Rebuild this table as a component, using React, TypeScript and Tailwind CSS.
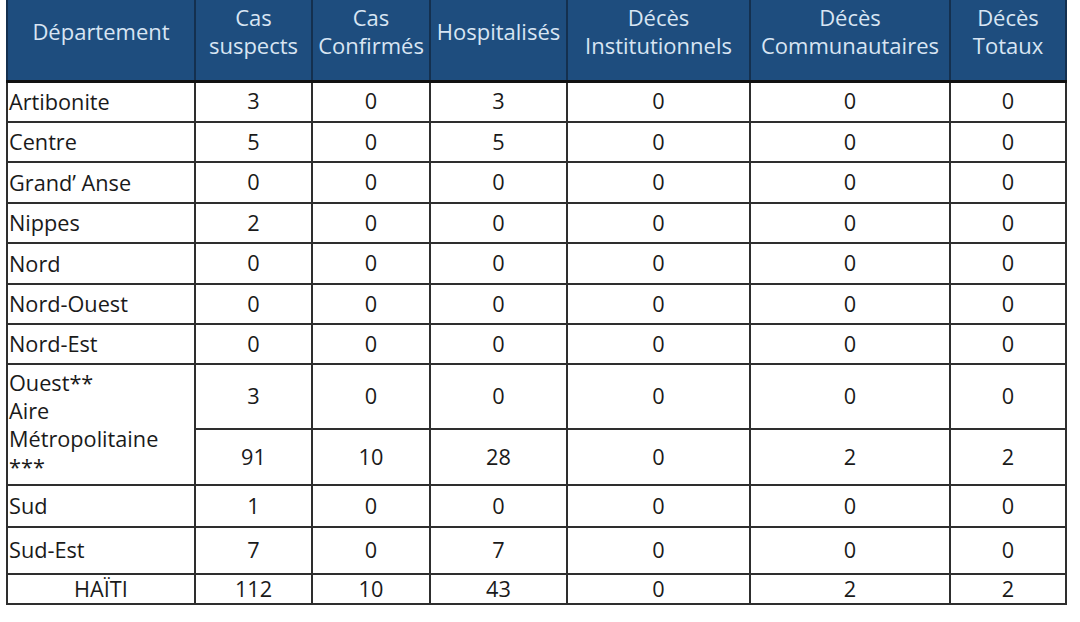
import React from "react";

const cols = [188, 117, 118, 137, 183, 200, 116];

const headers: string[][] = [
  ["Département"],
  ["Cas", "suspects"],
  ["Cas", "Confirmés"],
  ["Hospitalisés"],
  ["Décès", "Institutionnels"],
  ["Décès", "Communautaires"],
  ["Décès", "Totaux"],
];

type Row = { name: string; vals: string[]; h: number };

const rowsTop: Row[] = [
  { name: "Artibonite", vals: ["3", "0", "3", "0", "0", "0"], h: 41 },
  { name: "Centre", vals: ["5", "0", "5", "0", "0", "0"], h: 40 },
  { name: "Grand’ Anse", vals: ["0", "0", "0", "0", "0", "0"], h: 41 },
  { name: "Nippes", vals: ["2", "0", "0", "0", "0", "0"], h: 40 },
  { name: "Nord", vals: ["0", "0", "0", "0", "0", "0"], h: 41 },
  { name: "Nord-Ouest", vals: ["0", "0", "0", "0", "0", "0"], h: 40 },
  { name: "Nord-Est", vals: ["0", "0", "0", "0", "0", "0"], h: 40 },
];

const rowsBottom: Row[] = [
  { name: "Sud", vals: ["1", "0", "0", "0", "0", "0"], h: 42 },
  { name: "Sud-Est", vals: ["7", "0", "7", "0", "0", "0"], h: 47 },
];

const cellB = "border-2 border-[#2e2e2e]";

export default function App() {
  return (
    <div className="w-[1080px] h-[622px] bg-white font-['Open_Sans',sans-serif] text-[21.7px] text-[#1a1a1a] overflow-hidden">
      <div className="pl-[6px]">
        <table className="border-collapse table-fixed w-[1061px]">
          <colgroup>
            {cols.map((w, i) => (
              <col key={i} style={{ width: w }} />
            ))}
          </colgroup>
          <thead>
            <tr className="h-[81px]">
              {headers.map((lines, i) => (
                <th
                  key={i}
                  className="bg-[#1e4d7e] text-[#d8e5f3] text-[22px] font-normal text-center align-middle leading-[28px] pb-[18px] border-x-2 border-x-[#14304f] border-b-[3px] border-b-[#111] border-t-0 p-0 whitespace-nowrap"
                >
                  {lines.map((l, j) => (
                    <div key={j}>{l}</div>
                  ))}
                </th>
              ))}
            </tr>
          </thead>
          <tbody>
            {rowsTop.map((r) => (
              <tr key={r.name} style={{ height: r.h }}>
                <td className={`${cellB} text-left pl-[1px] p-0 leading-[28px] whitespace-nowrap`}>{r.name}</td>
                {r.vals.map((v, i) => (
                  <td key={i} className={`${cellB} text-center p-0`}>
                    {v}
                  </td>
                ))}
              </tr>
            ))}
            <tr className="h-[65px]">
              <td rowSpan={2} className={`${cellB} text-left pl-[1px] p-0 leading-[28px] align-middle`}>
                <div>Ouest**</div>
                <div>Aire</div>
                <div>Métropolitaine</div>
                <div>***</div>
              </td>
              {["3", "0", "0", "0", "0", "0"].map((v, i) => (
                <td key={i} className={`${cellB} text-center p-0`}>
                  {v}
                </td>
              ))}
            </tr>
            <tr className="h-[56px]">
              {["91", "10", "28", "0", "2", "2"].map((v, i) => (
                <td key={i} className={`${cellB} text-center p-0`}>
                  {v}
                </td>
              ))}
            </tr>
            {rowsBottom.map((r) => (
              <tr key={r.name} style={{ height: r.h }}>
                <td className={`${cellB} text-left pl-[1px] p-0 whitespace-nowrap`}>{r.name}</td>
                {r.vals.map((v, i) => (
                  <td key={i} className={`${cellB} text-center p-0`}>
                    {v}
                  </td>
                ))}
              </tr>
            ))}
            <tr className="h-[30px]">
              <td className={`${cellB} text-center p-0 leading-[24px]`}>HAÏTI</td>
              {["112", "10", "43", "0", "2", "2"].map((v, i) => (
                <td key={i} className={`${cellB} text-center p-0 leading-[24px]`}>
                  {v}
                </td>
              ))}
            </tr>
          </tbody>
        </table>
      </div>
    </div>
  );
}
